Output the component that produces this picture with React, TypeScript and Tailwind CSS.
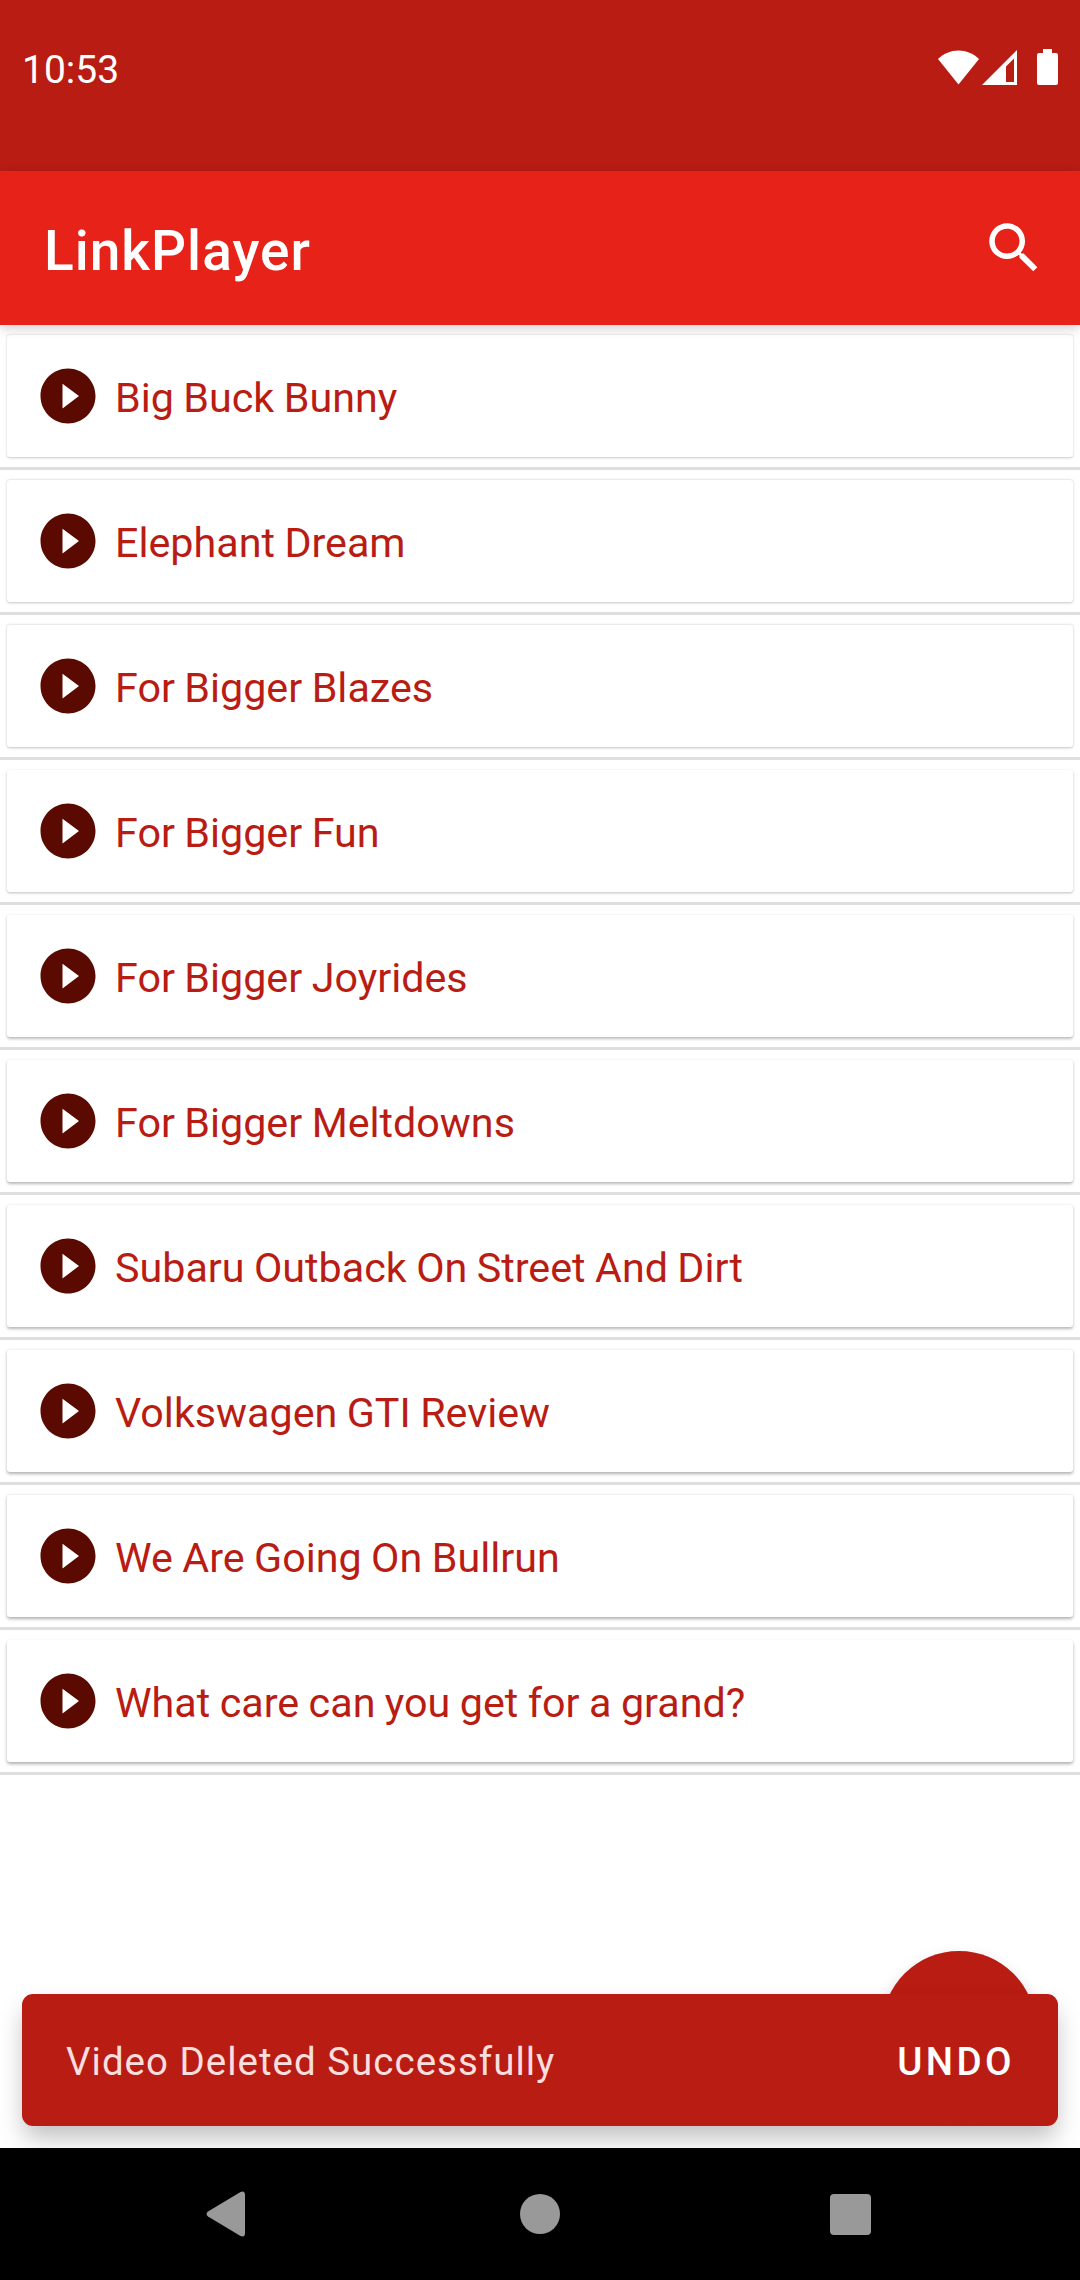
import React from 'react';

const videos = [
    'Big Buck Bunny',
    'Elephant Dream',
    'For Bigger Blazes',
    'For Bigger Fun',
    'For Bigger Joyrides',
    'For Bigger Meltdowns',
    'Subaru Outback On Street And Dirt',
    'Volkswagen GTI Review',
    'We Are Going On Bullrun',
    'What care can you get for a grand?',
];

const StatusBar = () => (
    <div className="h-[171px] bg-[#b91c13] flex items-start justify-between pl-[22px] pr-[22px] shrink-0">
        <span className="mt-[47px] text-[39px] leading-[46px] text-white">10:53</span>
        <div className="mt-[49px] flex items-end">
            <svg viewBox="0 0 41 35" className="w-[41px] h-[35px]" fill="#fff">
                <path d="M20.5 34.5L0 9C5.8 3.4 13 .5 20.5 .5S35.200 3.400 41 9z" />
            </svg>
            <svg viewBox="0 0 35 35" className="w-[35px] h-[35px] ml-[3px]" fill="#fff">
                <path fillRule="evenodd" d="M35 0V35H0zM32 8.500L24 16.500V32H32z" />
            </svg>
            <svg viewBox="0 0 21 36" className="w-[21px] h-[36px] ml-[20px]" fill="#fff">
                <path d="M6 0H15V4H19Q21 4 21 6V34Q21 36 19 36H2Q0 36 0 34V6Q0 4 2 4H6z" />
            </svg>
        </div>
    </div>
);

const AppBar = () => (
    <header className="relative z-10 h-[154px] bg-[#e62219] flex items-center justify-between pl-[44px] pr-[33px] shrink-0 shadow-[0_3px_11px_rgba(0,0,0,0.2)]">
        <h1 className="mt-[5px] text-[55px] leading-[64px] tracking-[1px] font-medium text-white">LinkPlayer</h1>
        <svg viewBox="0 0 24 24" className="w-[66px] h-[66px]" fill="#fff">
            <path d="M15.5 14h-.79l-.28-.27C15.41 12.590 16 11.110 16 9.500 16 5.910 13.090 3 9.500 3S3 5.910 3 9.500 5.910 16 9.500 16c1.610 0 3.090-.59 4.230-1.570l.27.28v.79l5 4.990L20.490 19l-4.990-5zm-6 0C7.010 14 5 11.990 5 9.500S7.010 5 9.500 5 14 7.010 14 9.500 11.990 14 9.500 14z" />
        </svg>
    </header>
);

const VideoRow = ({ title, index }: { title: string; index: number }) => {
    const depth = index / (videos.length - 1);
    const shadow = `0 ${0.5 + depth * 1.5}px ${2.5 + depth}px rgba(0,0,0,${0.22 + depth * 0.1})`;

    return (
        <li className="h-[145px] px-[7px] pt-[10px] border-b-[3px] border-[#dfdfdf]">
            <div className="h-[122px] rounded-[3px] bg-white flex items-center pl-[28px]" style={{ boxShadow: shadow }}>
                <svg viewBox="0 0 24 24" className="w-[66px] h-[66px]" fill="#5a0a00">
                    <path d="M12 2C6.480 2 2 6.480 2 12s4.480 10 10 10 10-4.480 10-10S17.520 2 12 2zm-2 14.500v-9l6 4.500-6 4.500z" />
                </svg>
                <span className="ml-[14px] mt-[3px] text-[41.25px] leading-[48px] [word-spacing:-0.8px] text-[#b91c13] whitespace-nowrap">{title}</span>
            </div>
        </li>
    );
};

const Snackbar = () => (
    <div className="absolute left-[22px] right-[22px] bottom-[22px] h-[132px] rounded-[11px] bg-[#b91c13] flex items-center justify-between pl-[44px] pr-[43px] shadow-[0_14px_24px_-2px_rgba(0,0,0,0.25)]">
        <span className="mt-[3px] text-[38.5px] leading-[46px] tracking-[1px] text-[#f8dfde]">Video Deleted Successfully</span>
        <button className="mt-[3px] text-[38.5px] leading-[46px] tracking-[3.4px] font-medium text-white">UNDO</button>
    </div>
);

const NavigationBar = () => (
    <nav className="h-[132px] bg-black flex items-center justify-between pl-[206px] pr-[209px] shrink-0">
        <svg viewBox="0 0 39 46" className="w-[39px] h-[46px]" fill="#999">
            <path d="M34.500 .9Q39 -.8 39 4V42Q39 46.800 34.500 45.100L2 25.600Q-1 23 2 20.400z" />
        </svg>
        <div className="ml-[5px] w-[40px] h-[40px] rounded-full bg-[#999]" />
        <div className="w-[41px] h-[41px] rounded-[4px] bg-[#999]" />
    </nav>
);

const App = () => {
    return (
        <div className="w-[1080px] h-[2280px] flex flex-col bg-white overflow-hidden font-[Roboto,sans-serif]">
            <StatusBar />
            <AppBar />
            <main className="relative flex-1 overflow-hidden">
                <ul>
                    {videos.map((title, index) => (
                        <VideoRow key={title} title={title} index={index} />
                    ))}
                </ul>
                <div className="absolute right-[44px] bottom-[43px] w-[154px] h-[154px] rounded-full bg-[#b91c13] shadow-[0_8px_16px_rgba(0,0,0,0.22)]" />
                <Snackbar />
            </main>
            <NavigationBar />
        </div>
    );
};

export default App;
